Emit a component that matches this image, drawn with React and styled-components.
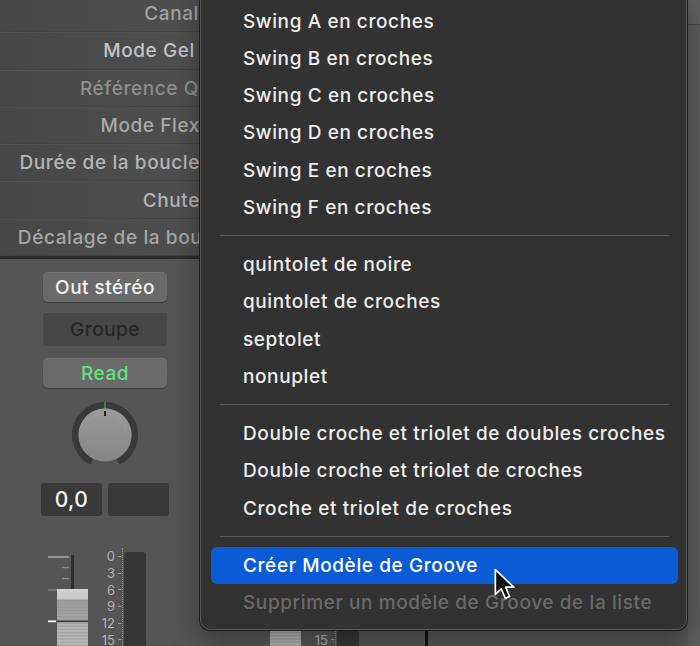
import React from "react";
import styled, { createGlobalStyle } from "styled-components";

const GlobalStyle = createGlobalStyle`
  html, body { margin: 0; padding: 0; background: #555555; }
  body { font-family: Inter, "Noto Sans", sans-serif; -webkit-font-smoothing: antialiased; }
  * { box-sizing: border-box; }
`;

const Screen = styled.div`
  position: relative;
  width: 700px;
  height: 646px;
  overflow: hidden;
  display: flex;
  background: #555555;
`;

/* ---------- inspector (left column) ---------- */

const Inspector = styled.aside`
  width: 200px;
  flex: none;
  display: flex;
  flex-direction: column;
`;

const ParamList = styled.div`
  height: 259px;
  flex: none;
  display: flex;
  flex-direction: column;
  justify-content: flex-end;
  overflow: hidden;
  border-bottom: 3px solid #2c2c2c;
`;

const ParamRow = styled.div`
  flex: none;
  height: 37.3px;
  display: flex;
  align-items: center;
  justify-content: flex-end;
  overflow: hidden;
  background: linear-gradient(90deg, #474747, #4f4f4f);
  border-top: 1px solid #515151;
  border-bottom: 1px solid #444444;
`;

const ParamLabel = styled.span`
  flex: none;
  white-space: nowrap;
  font-size: 19px;
  font-weight: 500;
  letter-spacing: 0.6px;
  color: ${(p) => p.$tone};
  margin-right: ${(p) => p.$offset}px;
`;

/* ---------- channel strip ---------- */

const Strip = styled.section`
  flex: none;
  width: ${(p) => p.$width}px;
  height: 387px;
  padding: 13px 0 0 ${(p) => p.$inset}px;
  display: flex;
  flex-direction: column;
  justify-content: flex-end;
  align-items: flex-start;
  background: #555555;
`;

const StripColumn = styled.div`
  width: 128px;
  flex: 1;
  display: flex;
  flex-direction: column;
  align-items: center;
`;

const StripButton = styled.div`
  width: 124px;
  height: 30px;
  display: flex;
  align-items: center;
  justify-content: center;
  border-radius: 5px;
  background: #6a6a6a;
  box-shadow: inset 0 1px 0 #737373, 0 1px 1px #3e3e3e;
  font-size: 19px;
  font-weight: 500;
  letter-spacing: 0.5px;
  color: ${(p) => p.$color || "#f1f1f1"};
  margin-top: ${(p) => p.$gap || 0}px;
`;

const GroupSlot = styled.div`
  width: 124px;
  height: 33px;
  margin-top: 11px;
  display: flex;
  align-items: center;
  justify-content: center;
  background: #474747;
  border-radius: 2px;
  font-size: 19px;
  font-weight: 500;
  letter-spacing: 0.5px;
  color: #262626;
`;

const KnobWrap = styled.div`
  margin-top: 14px;
  width: 66px;
  height: 66px;
`;

const ValueRow = styled.div`
  margin-top: 15px;
  width: 128px;
  display: flex;
  gap: 6px;
`;

const ValueField = styled.div`
  flex: 1;
  height: 33px;
  display: flex;
  align-items: center;
  justify-content: center;
  background: #393939;
  border-radius: 3px;
  font-size: 21px;
  font-weight: 500;
  letter-spacing: 0.4px;
  color: #f4f4f4;
`;

const FaderSection = styled.div`
  flex: none;
  margin-top: ${(p) => p.$gap || 0}px;
  width: 128px;
  height: 98px;
  display: flex;
  align-items: stretch;
`;

const FaderArt = styled.svg`
  flex: none;
  width: 48px;
  height: 98px;
  display: block;
`;

const MARK_STEP = 16.7;

const Scale = styled.div`
  flex: none;
  width: 34px;
  display: flex;
  flex-direction: column;
  padding-top: ${(p) => (p.$skip || 0) * MARK_STEP}px;
  border-right: 1px dotted #8c8c8c;
`;

const ScaleMark = styled.div`
  height: ${MARK_STEP}px;
  flex: none;
  display: flex;
  align-items: center;
  justify-content: flex-end;
  gap: 3px;
  padding-right: 1px;
  font-size: 13px;
  color: #b2b2b2;
  &::after {
    content: "";
    width: 3px;
    height: 1px;
    background: #9a9a9a;
  }
`;

const Meter = styled.div`
  flex: none;
  width: 22px;
  margin: 4px 0 0 1px;
  background: #363636;
  border-radius: 3px 3px 0 0;
`;

/* ---------- mixer area behind the popup ---------- */

const Mixer = styled.main`
  flex: 1;
  display: flex;
  align-items: flex-end;
`;

const StripEdge = styled.div`
  width: 3px;
  align-self: stretch;
  background: #111111;
`;

const Filler = styled.div`
  flex: 1;
  align-self: stretch;
  background: #555555;
`;

const SideRail = styled.div`
  width: 12px;
  align-self: stretch;
  background: #5d5d5d;
  border-top: 24px solid #626262;
  box-shadow: inset 0 1px 0 #444444;
`;

/* ---------- popup menu ---------- */

const PopupMenu = styled.div`
  position: absolute;
  left: 200px;
  top: -14px;
  width: 487px;
  height: 644px;
  padding: 15.4px 8px 0 10px;
  background: #323232;
  border: 1px solid #595959;
  border-radius: 10px;
  box-shadow: 0 0 0 1px #1d1d1d, 0 10px 30px rgba(0, 0, 0, 0.35);
  display: flex;
  flex-direction: column;
`;

const MenuItem = styled.div`
  flex: none;
  height: 37.25px;
  display: flex;
  align-items: center;
  padding-left: 32px;
  border-radius: 6px;
  font-size: 19px;
  font-weight: 500;
  letter-spacing: 0.6px;
  white-space: nowrap;
  color: ${(p) => (p.$disabled ? "#6a6a6a" : "#ededed")};
  background: ${(p) => (p.$active ? "#0a5bd4" : "transparent")};
  ${(p) => p.$active && "color: #ffffff;"}
`;

const MenuSeparator = styled.div`
  flex: none;
  height: 20px;
  display: flex;
  align-items: center;
  padding: 0 9px;
  &::after {
    content: "";
    flex: 1;
    height: 1px;
    background: #5a5a5a;
  }
`;

const Pointer = styled.svg`
  position: absolute;
  left: 493px;
  top: 568px;
  width: 28px;
  height: 36px;
`;

/* ---------- drawings ---------- */

function Knob() {
  const cx = 33;
  const cy = 33;
  const r = 29.7;
  const pt = (deg) => {
    const a = (deg * Math.PI) / 180;
    return [cx + r * Math.sin(a), cy - r * Math.cos(a)];
  };
  const [x0, y0] = pt(-154);
  const [x1, y1] = pt(154);
  return (
    <svg width="66" height="66" viewBox="0 0 66 66">
      <defs>
        <linearGradient id="knobFace" x1="0" y1="0" x2="0" y2="1">
          <stop offset="0" stopColor="#9a9a9a" />
          <stop offset="1" stopColor="#858585" />
        </linearGradient>
      </defs>
      <path
        d={`M${x0} ${y0} A${r} ${r} 0 1 1 ${x1} ${y1}`}
        fill="none"
        stroke="#393939"
        strokeWidth="6.6"
      />
      <circle cx={cx} cy={cy} r="26.6" fill="url(#knobFace)" />
      <path d="M12 28 A21.5 21.5 0 0 1 54 28" fill="none" stroke="#a8a8a8" strokeWidth="0.8" opacity="0.5" />
      <rect x="32.5" y="0" width="1" height="7" fill="#52c46b" />
      <rect x="32" y="9" width="2" height="5" fill="#1e1e1e" />
    </svg>
  );
}

function Fader() {
  const bands = [];
  for (let y = 52; y < 98; y += 3.2) {
    bands.push(<rect key={y} x="16" y={y} width="31" height="1.4" fill="#8f8f8f" opacity="0.45" />);
  }
  return (
    <FaderArt viewBox="0 0 48 98">
      <defs>
        <linearGradient id="capFace" x1="0" y1="0" x2="0" y2="1">
          <stop offset="0" stopColor="#d2d3d2" />
          <stop offset="0.17" stopColor="#c4c5c4" />
          <stop offset="0.2" stopColor="#9e9e9e" />
          <stop offset="0.55" stopColor="#a4a4a4" />
          <stop offset="0.6" stopColor="#b4b4b4" />
          <stop offset="1" stopColor="#b8b8b8" />
        </linearGradient>
      </defs>
      <line x1="7" y1="9" x2="28" y2="9" stroke="#a4a4a4" strokeWidth="1.6" />
      <rect x="30" y="7" width="3" height="36" fill="#2e2e2e" />
      <line x1="21" y1="19.5" x2="28" y2="19.5" stroke="#8a8a8a" strokeWidth="1.3" />
      <line x1="21" y1="30.5" x2="28" y2="30.5" stroke="#8a8a8a" strokeWidth="1.3" />
      <line x1="7" y1="42" x2="16" y2="42" stroke="#8a8a8a" strokeWidth="1.3" />
      <rect x="16" y="41" width="31" height="57" fill="url(#capFace)" />
      {bands}
      <rect x="16" y="72.5" width="31" height="1.6" fill="#3a3a3a" />
      <line x1="7" y1="73.3" x2="15" y2="73.3" stroke="#f2f2f2" strokeWidth="1.8" />
    </FaderArt>
  );
}

const allMarks = ["0", "3", "6", "9", "12", "15"];

function FaderGroup({ gap, marks, skip }) {
  return (
    <FaderSection $gap={gap}>
      <Fader />
      <Scale $skip={skip}>
        {marks.map((m) => (
          <ScaleMark key={m}>{m}</ScaleMark>
        ))}
      </Scale>
      <Meter />
    </FaderSection>
  );
}

function ChannelStrip() {
  return (
    <Strip $width={200} $inset={41}>
      <StripColumn>
        <StripButton>Out stéréo</StripButton>
        <GroupSlot>Groupe</GroupSlot>
        <StripButton $gap={12} $color="#62e37c">Read</StripButton>
        <KnobWrap>
          <Knob />
        </KnobWrap>
        <ValueRow>
          <ValueField>0,0</ValueField>
          <ValueField />
        </ValueRow>
        <FaderGroup gap={32} marks={allMarks} />
      </StripColumn>
    </Strip>
  );
}

/* the neighbouring strip only shows its fader foot below the popup */
function NeighbourStrip() {
  return (
    <Strip $width={225} $inset={54}>
      <FaderGroup marks={["15"]} skip={5} />
    </Strip>
  );
}

const params = [
  { label: "Canal", tone: "#a2a2a2", offset: 1 },
  { label: "Mode Gel", tone: "#c3c3c3", offset: 5 },
  { label: "Référence Q", tone: "#8e8e8e", offset: 1 },
  { label: "Mode Flex", tone: "#a9a9a9", offset: 0 },
  { label: "Durée de la boucle", tone: "#b5b5b5", offset: 0 },
  { label: "Chute", tone: "#b5b5b5", offset: 0 },
  { label: "Décalage de la boucle", tone: "#a6a6a6", offset: -31 },
];

const menuGroups = [
  [
    "Swing A en croches",
    "Swing B en croches",
    "Swing C en croches",
    "Swing D en croches",
    "Swing E en croches",
    "Swing F en croches",
  ],
  ["quintolet de noire", "quintolet de croches", "septolet", "nonuplet"],
  [
    "Double croche et triolet de doubles croches",
    "Double croche et triolet de croches",
    "Croche et triolet de croches",
  ],
];

export default function App() {
  return (
    <>
      <GlobalStyle />
      <Screen>
        <Inspector>
          <ParamList>
            {params.map((p) => (
              <ParamRow key={p.label}>
                <ParamLabel $tone={p.tone} $offset={p.offset}>
                  {p.label}
                </ParamLabel>
              </ParamRow>
            ))}
          </ParamList>
          <ChannelStrip />
        </Inspector>

        <Mixer>
          <NeighbourStrip />
          <StripEdge />
          <Filler />
          <SideRail />
        </Mixer>

        <PopupMenu>
          {menuGroups.map((group, i) => (
            <React.Fragment key={i}>
              {group.map((item) => (
                <MenuItem key={item}>{item}</MenuItem>
              ))}
              <MenuSeparator />
            </React.Fragment>
          ))}
          <MenuItem $active>Créer Modèle de Groove</MenuItem>
          <MenuItem $disabled>Supprimer un modèle de Groove de la liste</MenuItem>
        </PopupMenu>

        <Pointer viewBox="0 0 26 34">
          <path
            d="M2 1.5 L2 25 L7.6 19.6 L11.4 28.6 L15.4 26.9 L11.7 18.1 L19.4 18.1 Z"
            fill="#111111"
            stroke="#ffffff"
            strokeWidth="1.6"
            strokeLinejoin="round"
          />
        </Pointer>
      </Screen>
    </>
  );
}
